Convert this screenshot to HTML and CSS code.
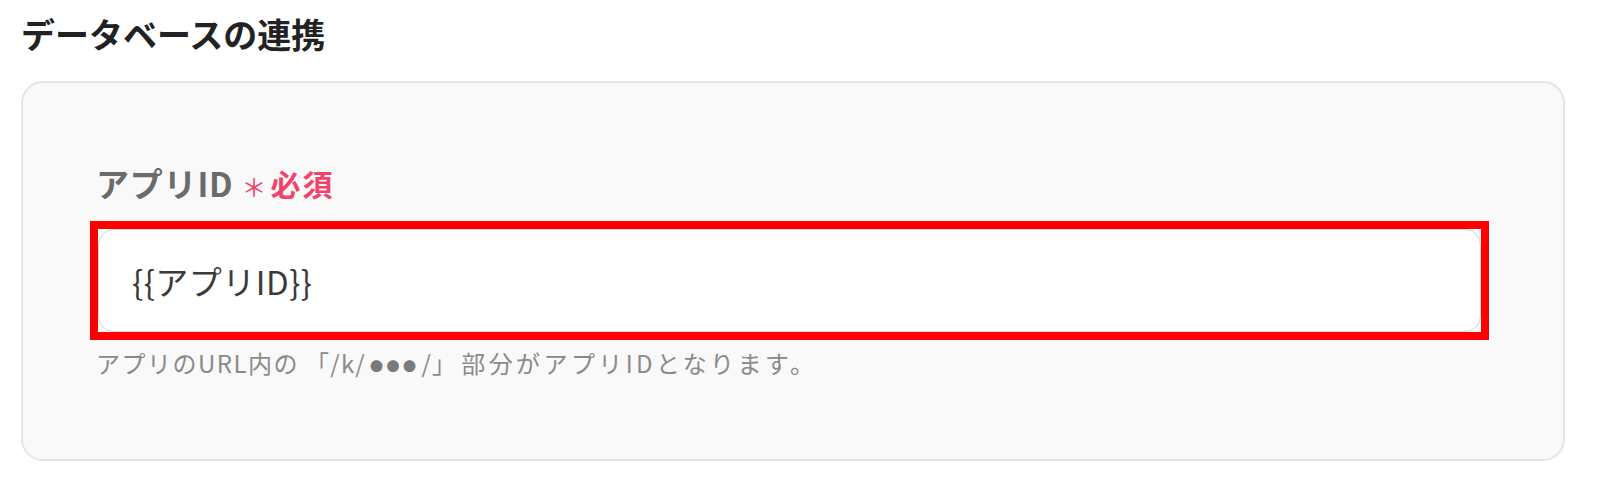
FILE: index.html
```html
<!DOCTYPE html>
<html lang="ja">
<head>
<meta charset="utf-8">
<title>データベースの連携</title>
<link rel="stylesheet" href="styles.css">
</head>
<body>
<div class="page">
  <h2 class="section-title">データベースの連携</h2>
  <div class="card">
    <div class="field-label">
      <span class="label-text">アプリID</span>
      <span class="required"><span class="asterisk">＊</span>必須</span>
    </div>
    <div class="highlight">
      <div class="input">{{アプリID}}</div>
    </div>
    <p class="help">アプリのURL内の<span class="path">「/k/<span class="dots">●●●</span>/」</span><span class="tail">部分がアプリIDとなります。</span></p>
  </div>
</div>
</body>
</html>
```
FILE: styles.css
```css
html, body {
  margin: 0;
  padding: 0;
  background: #ffffff;
}
body {
  font-family: "Noto Sans CJK JP", "Noto Sans", sans-serif;
}
.page {
  padding: 13px 34px 0 21px;
}
.section-title {
  margin: 0;
  font-size: 34px;
  line-height: 42px;
  font-weight: 700;
  color: #222222;
}
.card {
  margin-top: 26px;
  width: 1544px;
  box-sizing: border-box;
  height: 380px;
  border: 2px solid #e3e5e9;
  border-radius: 22px;
  background: #f9f9f9;
  padding: 80px 74px 0 67px;
}
.field-label {
  display: flex;
  align-items: center;
  gap: 8px;
  margin-left: 6px;
  height: 40px;
}
.label-text {
  font-size: 33px;
  line-height: 40px;
  font-weight: 700;
  color: #6b6b6b;
  letter-spacing: 0.8px;
}
.required {
  font-size: 30px;
  line-height: 40px;
  font-weight: 700;
  color: #f2436d;
  letter-spacing: 2px;
  display: flex;
  align-items: center;
  gap: 7px;
}
.asterisk {
  font-size: 25px;
  font-weight: 400;
  width: 22px;
  text-align: center;
  letter-spacing: 0;
  position: relative;
  top: 3px;
}
.highlight {
  margin-top: 18px;
  border: 8px solid #ff0000;
}
.input {
  height: 103px;
  box-sizing: border-box;
  border: 1px solid #d3d6da;
  border-radius: 16px;
  background: #ffffff;
  padding-left: 33px;
  display: flex;
  align-items: center;
  font-size: 33px;
  letter-spacing: 0.5px;
  color: #3a3a3a;
}
.help {
  margin: 8px 0 0 6px;
  font-size: 24px;
  line-height: 30px;
  letter-spacing: 1.5px;
  color: #8a8a8a;
}
.path {
  margin: 0 4px 0 6px;
  letter-spacing: 1.2px;
}
.dots {
  font-size: 13px;
  letter-spacing: 3.5px;
  position: relative;
  top: -2px;
  padding: 0 2px 0 4px;
  color: #7a7a7a;
}
.tail {
  letter-spacing: 3.4px;
}
```
